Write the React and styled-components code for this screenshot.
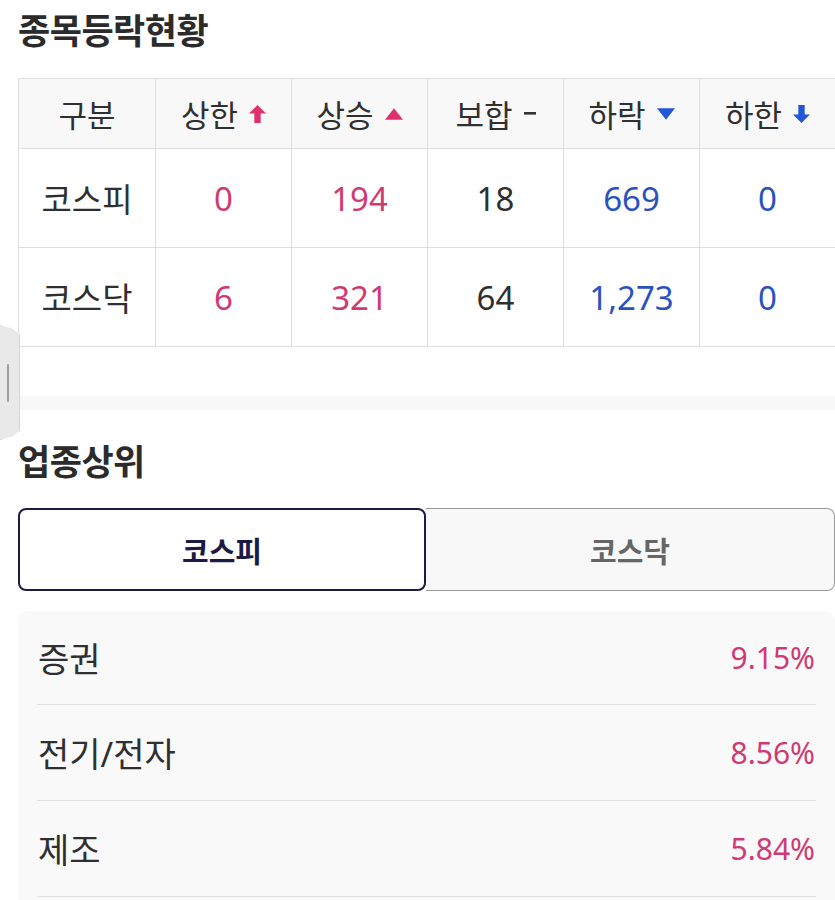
import React from "react";
import styled, { createGlobalStyle } from "styled-components";

const GlobalStyle = createGlobalStyle`
    html, body {
        margin: 0;
        padding: 0;
        background: #ffffff;
        overflow: hidden;
    }
    body {
        font-family: "Noto Sans", "Noto Sans CJK KR", sans-serif;
        color: #333333;
    }
`;

const PINK = "#cf3a73";
const BLUE = "#2a52be";

const Page = styled.div`
    width: 817px;
    padding: 8px 0 0 18px;
`;

const Title = styled.h2`
    margin: 0;
    font-size: 35px;
    line-height: 46px;
    font-weight: 700;
    color: #2b2b2b;
    letter-spacing: -0.5px;
`;

const Table = styled.div`
    margin-top: 24px;
    display: grid;
    grid-template-columns: 137px repeat(5, 136px);
    border-top: 1px solid #dedede;
    border-left: 1px solid #dedede;
`;

const Cell = styled.div`
    display: flex;
    align-items: center;
    justify-content: center;
    gap: 11px;
    height: ${(p) => (p.$head ? "69px" : "98px")};
    background: ${(p) => (p.$head ? "#f8f8f8" : "#ffffff")};
    border-right: 1px solid #dedede;
    border-bottom: 1px solid #dedede;
    font-size: ${(p) => (p.$head ? "31px" : "33px")};
    color: ${(p) => p.$color || "#2f2f2f"};
    font-weight: 400;
`;

const Band = styled.div`
    height: 14px;
    margin: 49px 0 0 -18px;
    width: 853px;
    background: #f8f8f8;
`;

const SubTitle = styled(Title)`
    margin-top: 29px;
`;

const Tabs = styled.div`
    margin-top: 23px;
    display: grid;
    grid-template-columns: 408px 409px;
`;

const Tab = styled.button`
    height: 83px;
    box-sizing: border-box;
    font-family: inherit;
    font-size: 29px;
    font-weight: 700;
    border-radius: 8px;
    cursor: pointer;
    color: ${(p) => (p.$active ? "#1b1b45" : "#666666")};
    background: ${(p) => (p.$active ? "#ffffff" : "#f8f8f8")};
    border: ${(p) => (p.$active ? "2px solid #1b1b45" : "1px solid #9a9a9a")};
    ${(p) => (p.$active ? "" : "border-left: none; border-radius: 0 8px 8px 0;")}
`;

const Card = styled.div`
    margin-top: 20px;
    background: #f9f9fa;
    border-radius: 10px;
    padding: 0 19px 24px;
`;

const Row = styled.div`
    display: flex;
    align-items: center;
    justify-content: space-between;
    height: ${(p) => (p.$first ? "93px" : "95px")};
    border-bottom: 1px solid #e0e0e0;
    padding-left: 1px;
`;

const Sector = styled.span`
    font-size: 34px;
    color: #2f2f2f;
`;

const Rate = styled.span`
    font-size: 30px;
    color: ${PINK};
    margin-right: 1px;
`;

const EdgeHandle = styled.div`
    position: fixed;
    left: 0;
    top: 325px;
    width: 20px;
    height: 115px;
    background: #e9e9e9;
    border: 1px solid #d6d6d6;
    border-left: none;
    box-sizing: border-box;
    border-radius: 0 6px 6px 0;
    clip-path: polygon(0 0, 60% 3%, 100% 8%, 100% 92%, 60% 97%, 0 100%);
    display: flex;
    align-items: center;
    padding-left: 7px;

    &::after {
        content: "";
        width: 2px;
        height: 38px;
        background: #9c9c9c;
        border-radius: 1px;
    }
`;

function UpArrow({ color }) {
    return (
        <svg width="17" height="18" viewBox="0 0 16 17">
            <path d="M8 0 L16 8 H11 V17 H5 V8 H0 Z" fill={color} />
        </svg>
    );
}

function DownArrow({ color }) {
    return (
        <svg width="17" height="18" viewBox="0 0 16 17">
            <path d="M5 0 H11 V9 H16 L8 17 L0 9 H5 Z" fill={color} />
        </svg>
    );
}

function Triangle({ color, down }) {
    return (
        <svg width="18" height="12" viewBox="0 0 17 11">
            <path d={down ? "M0 0 H17 L8.5 11 Z" : "M8.5 0 L17 11 H0 Z"} fill={color} />
        </svg>
    );
}

function Dash() {
    return (
        <svg width="12" height="3" viewBox="0 0 12 3">
            <rect width="12" height="2.6" fill="#333" />
        </svg>
    );
}

const headers = [
    { label: "구분" },
    { label: "상한", icon: <UpArrow color="#e0306f" /> },
    { label: "상승", icon: <Triangle color="#e0306f" /> },
    { label: "보합", icon: <Dash /> },
    { label: "하락", icon: <Triangle color="#2157d8" down /> },
    { label: "하한", icon: <DownArrow color="#2157d8" /> },
];

const markets = [
    { name: "코스피", values: ["0", "194", "18", "669", "0"] },
    { name: "코스닥", values: ["6", "321", "64", "1,273", "0"] },
];

const valueColors = [PINK, PINK, "#2f2f2f", BLUE, BLUE];

const sectors = [
    { name: "증권", rate: "9.15%" },
    { name: "전기/전자", rate: "8.56%" },
    { name: "제조", rate: "5.84%" },
];

export default function App() {
    return (
        <>
            <GlobalStyle />
            <Page>
                <Title>종목등락현황</Title>
                <Table>
                    {headers.map((h) => (
                        <Cell $head key={h.label}>
                            {h.label}
                            {h.icon}
                        </Cell>
                    ))}
                    {markets.map((m) => (
                        <React.Fragment key={m.name}>
                            <Cell>{m.name}</Cell>
                            {m.values.map((v, i) => (
                                <Cell key={i} $color={valueColors[i]}>
                                    {v}
                                </Cell>
                            ))}
                        </React.Fragment>
                    ))}
                </Table>
                <Band />
                <SubTitle>업종상위</SubTitle>
                <Tabs>
                    <Tab $active>코스피</Tab>
                    <Tab>코스닥</Tab>
                </Tabs>
                <Card>
                    {sectors.map((s, i) => (
                        <Row key={s.name} $first={i === 0}>
                            <Sector>{s.name}</Sector>
                            <Rate>{s.rate}</Rate>
                        </Row>
                    ))}
                </Card>
            </Page>
            <EdgeHandle />
        </>
    );
}
